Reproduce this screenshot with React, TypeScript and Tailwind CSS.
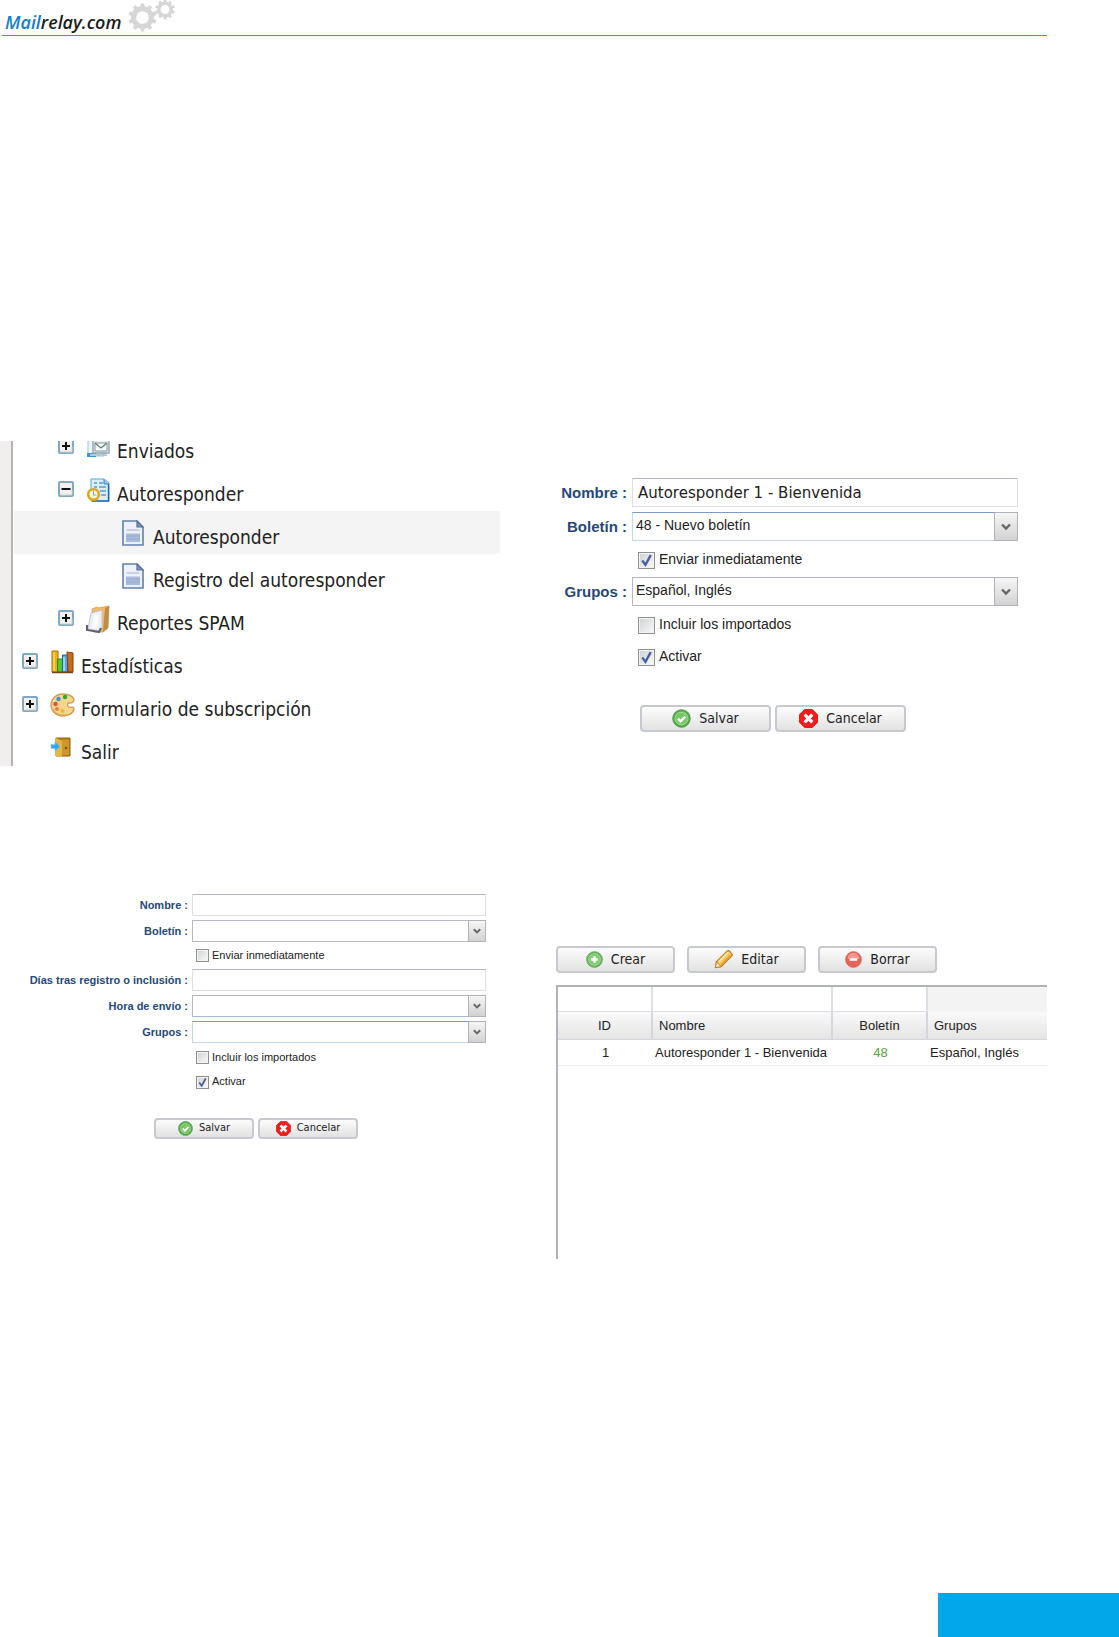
import { useId, type ReactNode } from "react";

type Size = "lg" | "sm";

const gearTeeth = [0, 36, 72, 108, 144, 180, 216, 252, 288, 324];

function Gear({ x, y, r }: { x: number; y: number; r: number }) {
  return (
    <g transform={`translate(${x} ${y}) scale(${r / 10})`}>
      <circle r="6.6" fill="none" stroke="#d6d6d6" strokeWidth="3.8" />
      {gearTeeth.map((a) => (
        <rect key={a} x="-1.4" y="-10.4" width="2.8" height="3.6" fill="#d6d6d6" transform={`rotate(${a})`} />
      ))}
    </g>
  );
}

function Toggle({ open, label }: { open?: boolean; label: string }) {
  return (
    <button type="button" aria-label={label} aria-expanded={!!open} className="block size-4">
      <svg viewBox="0 0 16 16" className="size-4">
        <rect x="1" y="1" width="14" height="14" rx="1" fill="#f1f0ec" stroke="#7fa9c4" strokeWidth="2" />
        <path d="M2.5 14h11.5V9" fill="none" stroke="#d5d2c8" />
        <path d={open ? "M3.5 8h9" : "M4 8h8M8 4v8"} stroke="#111" strokeWidth="2" />
      </svg>
    </button>
  );
}

function SentIcon() {
  return (
    <svg viewBox="0 0 24 24" className="size-6">
      <path d="M2 1h16v20H2z" fill="#eef6fc" stroke="#9ec3dd" />
      <path d="M1 18h9v4H1z" fill="#3f93d8" />
      <path d="M7 5h16v13H7z" fill="#e3efe6" stroke="#8fa6b4" strokeWidth="1.4" />
      <path d="M9 8h12v8H9z" fill="#f8fbf8" stroke="#8399a8" />
      <path d="m9 8 6 5 6-5" fill="none" stroke="#5f7c72" strokeWidth="1.3" />
      <path d="M4 20h17" stroke="#b9c6cf" strokeWidth="2" />
    </svg>
  );
}

function ClockPageIcon() {
  return (
    <svg viewBox="0 0 24 24" className="size-6">
      <path d="M5 1h13l5 4v18H5z" fill="#d8eefb" stroke="#52a5dc" />
      <path d="M18 1v5h5" fill="#8cc8ee" stroke="#3489c8" />
      <path d="M22.5 6v17H6" fill="none" stroke="#2469ae" strokeWidth="1.4" />
      <path d="M8 5h3m2 0h4M8 9h3m2 0h7M14 13h6m-5 4h5" stroke="#5b9bd2" strokeWidth="1.4" />
      <circle cx="7.5" cy="16.5" r="5.3" fill="#fffbe8" stroke="#dba91d" strokeWidth="2.5" />
      <path d="M7.5 13v4h3" fill="none" stroke="#7daacc" strokeWidth="1.2" />
    </svg>
  );
}

function PageIcon() {
  return (
    <svg viewBox="0 0 22 26" className="h-[26px] w-[22px]">
      <path d="M1 1h14l6 6v18H1z" fill="#edf2fa" stroke="#6480aa" strokeWidth="1.6" />
      <path d="M15 1v6h6z" fill="#8097bb" stroke="#566f99" strokeWidth="1.2" />
      <path d="M4.5 10h13" stroke="#b8c6de" strokeWidth="1.5" />
      <path d="M4 13.5h14V22H4z" fill="#a9bbdb" />
      <path d="M4 16h14M4 19h14" stroke="#93a8cf" strokeWidth="0.8" />
    </svg>
  );
}

function FolderIcon() {
  return (
    <svg viewBox="0 0 24 28" className="h-7 w-6">
      <path d="m6 4 5-2 1 1 11-2-1 22-5 4H8z" fill="#eebb6c" stroke="#d49b49" strokeWidth="0.8" />
      <path d="m19 3 4-2-1 22-5 4z" fill="#bf8b45" />
      <path d="m5 8 11-3v19l-4 2-10-2z" fill="#eceff5" stroke="#b4bac6" strokeWidth="0.8" />
      <path d="m8 10 5-1-1 13-6 1z" fill="#fafbfe" />
      <path d="M1 20v5l12 2 2-4" fill="none" stroke="#5d6470" strokeWidth="2" />
    </svg>
  );
}

function BooksIcon() {
  return (
    <svg viewBox="0 0 24 26" className="h-[26px] w-6">
      <path d="M2 2h6v21H2z" fill="#f1ae16" stroke="#a86c0b" />
      <path d="M4 3v19" stroke="#ffda59" strokeWidth="1.5" />
      <path d="M7.5 10h5v13h-5z" fill="#55c92a" stroke="#2b8b19" />
      <path d="M12.5 6h5v17h-5z" fill="#56a8ec" stroke="#2162ad" />
      <path d="M14 8v14" stroke="#b9e1ff" strokeWidth="1.5" />
      <path d="m17 3 6 1v19h-5z" fill="#c96a19" stroke="#87400d" />
      <path d="M2 23.5h21" stroke="#75450d" strokeWidth="1.5" />
    </svg>
  );
}

function PaletteIcon() {
  return (
    <svg viewBox="0 0 26 24" className="h-6 w-[26px]">
      <path
        d="M13 1C6 1 1 6 1 12s5 11 12 11c6 0 11-3 11-7 0-3-3-1-5-2s-2-4 0-4 5 0 5-3-5-6-11-6z"
        fill="#f5d68f"
        stroke="#cf9c48"
        strokeWidth="1.3"
      />
      <path d="M3 16c2 4 6 6 11 6s9-2 9-5" fill="none" stroke="#d9a552" />
      <circle cx="8.5" cy="6" r="2.2" fill="#3b8ede" />
      <circle cx="15" cy="4" r="2.2" fill="#36a537" />
      <circle cx="5.5" cy="11" r="2.2" fill="#e0512f" />
      <circle cx="7" cy="16" r="2" fill="#ee7d48" />
      <circle cx="12.5" cy="18" r="2" fill="#f0b92c" />
    </svg>
  );
}

function ExitIcon() {
  return (
    <svg viewBox="0 0 24 24" className="size-6">
      <path d="M6 2h14v18H6z" fill="#bc8319" stroke="#916012" />
      <path d="M10 4h9v15h-9z" fill="#cf962a" />
      <path d="m6 2 6 3v16l-6-1z" fill="#e5b540" />
      <circle cx="16" cy="12" r="1.3" fill="#7f540c" />
      <path d="M1 8.500h4V5.500l5 5-5 5v-3H1z" fill="#3ba4ee" stroke="#8ccaf6" strokeWidth="0.6" />
    </svg>
  );
}

const OkIcon = (
  <>
    <circle cx="10" cy="10" r="9.2" fill="#58ab4b" stroke="#4b9a45" />
    <circle cx="10" cy="10" r="6.8" fill="#79c665" stroke="#a4dc94" />
    <path d="m6.3 10.2 2.7 2.7 5-5" fill="none" stroke="#fff" strokeWidth="2.6" />
  </>
);

const CancelIcon = (
  <>
    <path d="M6 .5h8L19.5 6v8L14 19.5H6L.5 14V6z" fill="#f11c1c" stroke="#dc1818" />
    <path d="m6 6 8 8m0-8-8 8" stroke="#fff" strokeWidth="3.4" />
  </>
);

const AddIcon = (
  <>
    <circle cx="10" cy="10" r="9.2" fill="#6db761" stroke="#559f4d" />
    <circle cx="10" cy="10" r="6.9" fill="#7ecb70" stroke="#a5dc9b" />
    <path d="M10 6v8M6 10h8" stroke="#fff" strokeWidth="2.8" />
  </>
);

const EditIcon = (
  <>
    <path d="M1.5 18.5 2.5 12.5 13.5 1.500c1-1 2-1 3 0l2 2c1 1 1 2 0 3L7.500 17.500z" fill="#f9c55c" stroke="#bd7c25" strokeWidth="1.200" />
    <path d="m5 12.5 10-10" stroke="#ffe9a6" strokeWidth="2" />
    <path d="m7.5 15.500 10-10" stroke="#e79a32" strokeWidth="1.5" />
    <path d="m2.500 12.500 5 5-6 1z" fill="#fff0ce" stroke="#bd7c25" />
  </>
);

const DeleteIcon = (
  <>
    <circle cx="10" cy="10" r="9.2" fill="#e5675c" stroke="#d5574d" />
    <path d="M3 9a7 7 0 0 1 14 0z" fill="#f09a8f" />
    <path d="M5.5 10h9" stroke="#fff" strokeWidth="3" />
  </>
);

const buttonBase =
  "flex items-center justify-center rounded-[4px] border-2 border-[#c6c9d0] bg-linear-to-b from-[#fcfcfc] to-[#e2e2e2] font-['DejaVu_Sans_Condensed','DejaVu_Sans',sans-serif] text-[#222]";

function IconButton({ icon, className, iconClass, children }: { icon: ReactNode; className: string; iconClass: string; children: ReactNode }) {
  return (
    <button type="button" className={`${buttonBase} ${className}`}>
      <svg viewBox="0 0 20 20" className={iconClass}>
        {icon}
      </svg>
      {children}
    </button>
  );
}

const styles = {
  lg: {
    label: "w-[76px] pr-[5px] text-[15px]",
    field: "h-[29px]",
    input: "px-[5px] text-[15px]",
    select: "pl-[3px] pb-[2px] text-[14px]",
    arrow: "w-6",
    chevron: "w-[10px]",
    check: "ml-[82px] gap-1 text-[14px]",
    box: "size-[17px]",
    actions: "pl-[84px] pt-[33px] gap-1",
    button: "h-[27px] w-[131px] gap-2 text-[14px]",
    icon: "size-[19px]",
  },
  sm: {
    label: "w-48 pr-1 text-[11px]",
    field: "h-[22px]",
    input: "px-1 text-[11px]",
    select: "pl-[3px] text-[11px]",
    arrow: "w-[18px]",
    chevron: "w-2",
    check: "ml-[196px] gap-[3px] text-[11px]",
    box: "size-[13px]",
    actions: "pl-[154px] pt-6 gap-1",
    button: "h-[21px] w-[100px] gap-[6px] text-[11px]",
    icon: "size-[15px]",
  },
};

function FieldLabel({ size, id, children }: { size: Size; id: string; children: ReactNode }) {
  return (
    <label
      htmlFor={id}
      className={`shrink-0 text-right leading-4 font-bold whitespace-nowrap text-[#24497a] ${styles[size].label}`}
    >
      {children} :
    </label>
  );
}

function TextField({ size, label, value = "" }: { size: Size; label: string; value?: string }) {
  const id = useId();
  return (
    <div className="flex items-center">
      <FieldLabel size={size} id={id}>{label}</FieldLabel>
      <input
        id={id}
        type="text"
        defaultValue={value}
        className={`min-w-0 flex-1 border border-[#dcdfe6] border-t-[#b5b8c0] bg-white font-['DejaVu_Sans',sans-serif] text-[#222] ${styles[size].field} ${styles[size].input}`}
      />
    </div>
  );
}

function SelectField({ size, label, value = "", active }: { size: Size; label: string; value?: string; active?: boolean }) {
  const id = useId();
  const s = styles[size];
  return (
    <div className="flex items-center">
      <FieldLabel size={size} id={id}>{label}</FieldLabel>
      <div className={`relative min-w-0 flex-1 ${s.field}`}>
        <select
          id={id}
          defaultValue={value}
          className={`block size-full appearance-none border bg-white text-[#222] ${s.select} ${active ? "border-[#c3d6ee] border-t-[#7d9bc8]" : "border-[#b5b8c0]"}`}
        >
          <option value={value}>{value}</option>
        </select>
        <span
          className={`pointer-events-none absolute inset-y-0 right-0 flex items-center justify-center border border-[#b0b2b8] bg-linear-to-b from-[#f6f6f6] to-[#d2d2d2] ${s.arrow}`}
        >
          <svg viewBox="0 0 10 8" className={s.chevron}>
            <path d="m1 1.5 4 4 4-4" fill="none" stroke="#666" strokeWidth="2.4" />
          </svg>
        </span>
      </div>
    </div>
  );
}

function CheckField({ size, label, checked, className }: { size: Size; label: string; checked?: boolean; className: string }) {
  const s = styles[size];
  return (
    <label className={`flex items-center leading-4 text-[#222] ${s.check} ${className}`}>
      <span className={`relative ${s.box}`}>
        <input
          type="checkbox"
          defaultChecked={checked}
          className="peer block size-full appearance-none border border-[#8e8f8f] bg-linear-to-br from-[#cfd1d4] to-[#fafafa] shadow-[inset_0_0_0_1px_#f4f4f4]"
        />
        <svg viewBox="0 0 16 16" className="pointer-events-none absolute inset-0 hidden size-full peer-checked:block">
          <path d="m4 8 3 4 5-9" fill="none" stroke="#4a5f9e" strokeWidth="2.2" />
        </svg>
      </span>
      <span className="pb-[2px]">{label}</span>
    </label>
  );
}

function Actions({ size }: { size: Size }) {
  const s = styles[size];
  return (
    <div className={`flex ${s.actions}`}>
      <IconButton icon={OkIcon} className={s.button} iconClass={s.icon}>Salvar</IconButton>
      <IconButton icon={CancelIcon} className={s.button} iconClass={s.icon}>Cancelar</IconButton>
    </div>
  );
}

const indents = ["pl-2", "pl-11", "pl-20"];

const tree = [
  { label: "Enviados", level: 1, icon: <SentIcon />, toggle: "closed" },
  { label: "Autoresponder", level: 1, icon: <ClockPageIcon />, toggle: "open" },
  { label: "Autoresponder", level: 2, icon: <PageIcon />, selected: true },
  { label: "Registro del autoresponder", level: 2, icon: <PageIcon /> },
  { label: "Reportes SPAM", level: 1, icon: <FolderIcon />, toggle: "closed" },
  { label: "Estadísticas", level: 0, icon: <BooksIcon />, toggle: "closed" },
  { label: "Formulario de subscripción", level: 0, icon: <PaletteIcon />, toggle: "closed" },
  { label: "Salir", level: 0, icon: <ExitIcon /> },
];

function Tree() {
  return (
    <nav className="h-[325px] overflow-hidden border-l-[11px] border-[#f0efed]">
      <ul className="-mt-4 border-l-2 border-[#b4b4b4] pl-px">
        {tree.map((item, i) => (
          <li key={i} className={`flex h-[43px] items-center ${indents[item.level]} ${item.selected ? "bg-[#f4f4f4]" : ""}`}>
            <span className="w-7 shrink-0 pb-[2px]">
              {item.toggle && <Toggle open={item.toggle === "open"} label={item.label} />}
            </span>
            <span className="flex w-[31px] shrink-0">{item.icon}</span>
            <a
              href="#"
              className="mt-2 font-['DejaVu_Sans_Condensed','DejaVu_Sans',sans-serif] text-[19px] leading-5 whitespace-nowrap text-[#222]"
            >
              {item.label}
            </a>
          </li>
        ))}
      </ul>
    </nav>
  );
}

const headCell = "h-7 border-r-2 border-b border-[#d3d6dc] bg-linear-to-b from-[#fafafa] to-[#e4e4e4] font-normal";
const filterCell = "h-[25px] border-r-2 border-b border-[#dcdfe5] p-0";

function AutoresponderTable() {
  return (
    <div className="mt-3 h-[274px] border-t-2 border-l-2 border-[#b0b3ba]">
      <table className="w-full table-fixed border-separate border-spacing-0 text-[13px] text-[#222]">
        <colgroup>
          <col className="w-[95px]" />
          <col className="w-[180px]" />
          <col className="w-[95px]" />
          <col />
        </colgroup>
        <thead>
          <tr>
            <td className={filterCell}><input aria-label="ID" className="block size-full px-1" /></td>
            <td className={filterCell}><input aria-label="Nombre" className="block size-full px-1" /></td>
            <td className={filterCell}><input aria-label="Boletín" className="block size-full px-1" /></td>
            <td className="bg-[#f3f3f3] p-0" />
          </tr>
          <tr>
            <th className={headCell}>ID</th>
            <th className={`${headCell} pl-[6px] text-left`}>Nombre</th>
            <th className={headCell}>Boletín</th>
            <th className="h-7 border-b border-[#d3d6dc] bg-linear-to-b from-[#fafafa] to-[#e4e4e4] pl-[6px] text-left font-normal">Grupos</th>
          </tr>
        </thead>
        <tbody>
          <tr>
            <td className="h-[26px] border-b border-[#ededed] p-0 text-center">1</td>
            <td className="h-[26px] border-b border-[#ededed] p-0 pl-[2px] whitespace-nowrap">Autoresponder 1 - Bienvenida</td>
            <td className="h-[26px] border-b border-[#ededed] p-0 text-center">
              <a href="#" className="text-[#4ea635]">48</a>
            </td>
            <td className="h-[26px] border-b border-[#ededed] p-0 pl-[2px]">Español, Inglés</td>
          </tr>
        </tbody>
      </table>
    </div>
  );
}

export default function App() {
  const tool = "h-[27px] w-[119px] gap-2 text-[14px]";
  return (
    <div className="flex min-h-screen flex-col bg-white font-['Liberation_Sans',sans-serif]">
      {/* Header */}
      <header className="mr-[72px] ml-[2px] flex h-9 items-start border-b border-[#1a9fdb]">
        <a href="#" className="flex items-start pl-[3px]">
          <span className="pt-[10px] font-['Open_Sans',sans-serif] text-[18px] leading-6 font-semibold text-[#1c1c1c] italic">
            <span className="text-[#1280cb]">Mail</span>relay.com
          </span>
          <svg viewBox="0 0 48 34" className="ml-[6px] h-[34px] w-12">
            <Gear x={15.5} y={17.5} r={13.5} />
            <Gear x={38} y={9.5} r={9.5} />
          </svg>
        </a>
      </header>

      <main className="grid grid-cols-[minmax(0,500fr)_minmax(0,491fr)] gap-x-14 gap-y-32 pt-[405px] pr-[72px]">
        <Tree />

        {/* Filled form */}
        <form className="pt-[37px] pr-[29px]">
          <TextField size="lg" label="Nombre" value="Autoresponder 1 - Bienvenida" />
          <div className="mt-[5px]">
            <SelectField size="lg" label="Boletín" value="48 - Nuevo boletín" active />
          </div>
          <CheckField size="lg" label="Enviar inmediatamente" checked className="h-9 pt-[2px]" />
          <SelectField size="lg" label="Grupos" value="Español, Inglés" />
          <CheckField size="lg" label="Incluir los importados" className="h-9 pt-[2px]" />
          <CheckField size="lg" label="Activar" checked className="h-[30px]" />
          <Actions size="lg" />
        </form>

        {/* Empty form */}
        <form className="pr-[14px]">
          <div className="grid gap-1">
            <TextField size="sm" label="Nombre" />
            <SelectField size="sm" label="Boletín" />
          </div>
          <CheckField size="sm" label="Enviar inmediatamente" className="h-[27px]" />
          <div className="grid gap-1">
            <TextField size="sm" label="Días tras registro o inclusión" />
            <SelectField size="sm" label="Hora de envío" />
            <SelectField size="sm" label="Grupos" active />
          </div>
          <CheckField size="sm" label="Incluir los importados" className="h-[27px] pt-[2px]" />
          <CheckField size="sm" label="Activar" checked className="h-6" />
          <Actions size="sm" />
        </form>

        {/* List */}
        <section className="pt-[52px]">
          <div className="flex gap-3">
            <IconButton icon={AddIcon} className={tool} iconClass="size-[17px]">Crear</IconButton>
            <IconButton icon={EditIcon} className={tool} iconClass="size-[19px]">Editar</IconButton>
            <IconButton icon={DeleteIcon} className={tool} iconClass="size-[17px]">Borrar</IconButton>
          </div>
          <AutoresponderTable />
        </section>
      </main>

      <footer className="mt-auto ml-auto h-11 w-[181px] bg-[#02a7ea]" />
    </div>
  );
}
